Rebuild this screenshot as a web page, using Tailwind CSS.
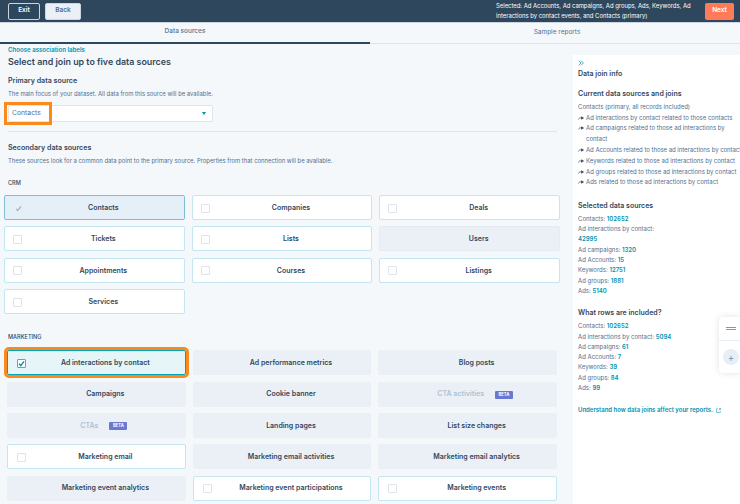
<!DOCTYPE html>
<html lang="en">
<head>
  <meta charset="UTF-8">
  <title>Select and join up to five data sources</title>
  <script src="https://cdn.jsdelivr.net/npm/@tailwindcss/browser@4"></script>
</head>
<body class="w-[740px] h-[504px] overflow-hidden bg-[#f5f8fa] text-[#33475b] font-['Inter','Noto_Sans',sans-serif]">
  <!-- top bar -->
  <header class="h-[23px] bg-[#2e475d] border-b border-[#cbd6e2] flex items-center pl-[8px] pr-[6px]">
    <button class="shrink-0 w-[32px] h-[17px] border border-[#cbd6e2] rounded-[2px] text-white text-[6.5px] font-semibold">Exit</button>
    <button class="shrink-0 w-[36px] h-[17px] ml-[5px] bg-[#eaf0f6] border border-[#cbd6e2] rounded-[2px] text-[#506e91] text-[6.5px] font-semibold">Back</button>
    <p class="ml-[415px] w-[209px] text-white text-[5.9px] leading-[10px] whitespace-nowrap">Selected: Ad Accounts, Ad campaigns, Ad groups, Ads, Keywords, Ad<br>interactions by contact events, and Contacts (primary)</p>
    <button class="shrink-0 w-[29px] h-[17px] bg-[#ff7a59] rounded-[2px] text-white text-[6.5px] font-semibold">Next</button>
  </header>

  <!-- tabs -->
  <nav class="h-[21px] flex text-[6.5px] text-[#516f90]">
    <div class="w-[370px] border-b-[2px] border-[#2e475d] flex items-center justify-center font-medium pb-[1px]">Data sources</div>
    <div class="w-[370px] border-b border-[#dfe3eb] flex items-center justify-center pb-[1px] pl-[4px]">Sample reports</div>
  </nav>

  <div class="flex">
    <!-- left column -->
    <main class="w-[573px] shrink-0 pt-[2px]">
      <div class="pl-[8px] pr-[16px]">
        <a class="block text-[#0091ae] text-[6.1px] leading-[8px] font-semibold">Choose association labels</a>
        <h1 class="mt-[1px] text-[8.9px] leading-[13px] font-semibold">Select and join up to five data sources</h1>
        <h2 class="mt-[8px] text-[7.1px] leading-[10px] font-semibold">Primary data source</h2>
        <p class="mt-[3px] text-[5.9px] leading-[9px] text-[#516f90]">The main focus of your dataset. All data from this source will be available.</p>
        <div class="relative mt-[7px] w-[205px] h-[17px] bg-white border border-[#dfe3eb] rounded-[2px] flex items-center justify-between pl-[3px] pr-[6px] text-[6.8px] text-[#516f90]">
          <span>Contacts</span>
          <span class="w-0 h-0 border-x-[2.5px] border-x-transparent border-t-[3px] border-t-[#0091ae]"></span>
          <span class="absolute left-[-5px] top-[-4px] w-[48px] h-[23px] border-[3px] border-[#f98b1d]"></span>
        </div>
        <hr class="mt-[9px] border-[#dfe3eb]">
        <h2 class="mt-[11px] text-[7.1px] leading-[10px] font-semibold">Secondary data sources</h2>
        <p class="mt-[3px] text-[5.9px] leading-[9px] text-[#516f90] whitespace-nowrap">These sources look for a common data point to the primary source. Properties from that connection will be available.</p>
        <h3 class="mt-[13.500px] text-[5.6px] leading-[8px] font-medium">CRM</h3>
      </div>

      <div class="mt-[8.500px] ml-[4px] w-[556px] grid grid-cols-3 gap-x-[7px] gap-y-[6.4px] auto-rows-[25px] text-[7px] font-semibold">
        <div class="relative flex items-center justify-center pl-[18px] pt-[1px] bg-[#e5eff8] border border-[#7fbfd4] rounded-[2px]"><svg class="absolute left-[10px] w-[7px] h-[7px]" viewBox="0 0 10 10" fill="none" stroke="#9fb2c6" stroke-width="1.8"><path d="M1.5 5.5 4 8 8.500 2"/></svg>Contacts</div>
        <div class="relative flex items-center justify-center pl-[18px] pt-[1px] bg-white border border-[#c4e6f0] rounded-[2px]"><span class="absolute left-[8px] w-[9px] h-[9px] bg-white border border-[#dfe3eb] rounded-[1px]"></span>Companies</div>
        <div class="relative flex items-center justify-center pl-[18px] pt-[1px] bg-white border border-[#c4e6f0] rounded-[2px]"><span class="absolute left-[8px] w-[9px] h-[9px] bg-white border border-[#dfe3eb] rounded-[1px]"></span>Deals</div>
        <div class="relative flex items-center justify-center pl-[18px] pt-[1px] bg-white border border-[#c4e6f0] rounded-[2px]"><span class="absolute left-[8px] w-[9px] h-[9px] bg-white border border-[#dfe3eb] rounded-[1px]"></span>Tickets</div>
        <div class="relative flex items-center justify-center pl-[18px] pt-[1px] bg-white border border-[#c4e6f0] rounded-[2px]"><span class="absolute left-[8px] w-[9px] h-[9px] bg-white border border-[#dfe3eb] rounded-[1px]"></span>Lists</div>
        <div class="flex items-center justify-center pl-[18px] pt-[1px] bg-[#eaf0f6] border border-[#e5ebf3] rounded-[2px]">Users</div>
        <div class="relative flex items-center justify-center pl-[18px] pt-[1px] bg-white border border-[#c4e6f0] rounded-[2px]"><span class="absolute left-[8px] w-[9px] h-[9px] bg-white border border-[#dfe3eb] rounded-[1px]"></span>Appointments</div>
        <div class="relative flex items-center justify-center pl-[18px] pt-[1px] bg-white border border-[#c4e6f0] rounded-[2px]"><span class="absolute left-[8px] w-[9px] h-[9px] bg-white border border-[#dfe3eb] rounded-[1px]"></span>Courses</div>
        <div class="relative flex items-center justify-center pl-[18px] pt-[1px] bg-white border border-[#c4e6f0] rounded-[2px]"><span class="absolute left-[8px] w-[9px] h-[9px] bg-white border border-[#dfe3eb] rounded-[1px]"></span>Listings</div>
        <div class="relative flex items-center justify-center pl-[18px] pt-[1px] bg-white border border-[#c4e6f0] rounded-[2px]"><span class="absolute left-[8px] w-[9px] h-[9px] bg-white border border-[#dfe3eb] rounded-[1px]"></span>Services</div>
      </div>

      <h3 class="mt-[19px] pl-[8px] text-[5.6px] leading-[8px] font-medium">MARKETING</h3>

      <div class="mt-[9px] ml-[7px] w-[550px] grid grid-cols-3 gap-x-[7px] gap-y-[6.4px] auto-rows-[25px] text-[7px] font-semibold">
        <div class="relative flex items-center justify-center pl-[18px] pt-[1px] bg-[#e5f5f8] border border-[#00a4bd] rounded-[2px] outline-[3px] outline-[#f98b1d]"><span class="absolute left-[9px] w-[9px] h-[9px] bg-white border border-[#7c98b6] rounded-[1px] flex items-center justify-center"><svg class="w-[7px] h-[7px]" viewBox="0 0 10 10" fill="none" stroke="#0091ae" stroke-width="2"><path d="M1.5 5.5 4 8 8.500 2"/></svg></span>Ad interactions by contact</div>
        <div class="flex items-center justify-center pl-[18px] pt-[1px] bg-[#eaf0f6] rounded-[2px]">Ad performance metrics</div>
        <div class="flex items-center justify-center pl-[18px] pt-[1px] bg-[#eaf0f6] rounded-[2px]">Blog posts</div>
        <div class="flex items-center justify-center pl-[18px] pt-[1px] bg-[#eaf0f6] rounded-[2px]">Campaigns</div>
        <div class="flex items-center justify-center pl-[18px] pt-[1px] bg-[#eaf0f6] rounded-[2px]">Cookie banner</div>
        <div class="flex items-center justify-center gap-[11px] pl-[15px] pt-[1px] bg-[#eaf0f6] rounded-[2px] text-[#b0c1d4]">CTA activities<span class="bg-[#6a78d1] text-white text-[4.2px] font-bold w-[18px] text-center leading-[8px] rounded-[1px]">BETA</span></div>
        <div class="flex items-center justify-center gap-[11px] pl-[15px] pt-[1px] bg-[#eaf0f6] rounded-[2px] text-[#b0c1d4]">CTAs<span class="bg-[#6a78d1] text-white text-[4.2px] font-bold w-[18px] text-center leading-[8px] rounded-[1px]">BETA</span></div>
        <div class="flex items-center justify-center pl-[18px] pt-[1px] bg-[#eaf0f6] rounded-[2px]">Landing pages</div>
        <div class="flex items-center justify-center pl-[18px] pt-[1px] bg-[#eaf0f6] rounded-[2px]">List size changes</div>
        <div class="relative flex items-center justify-center pl-[18px] pt-[1px] bg-white border border-[#c4e6f0] rounded-[2px]"><span class="absolute left-[9px] w-[9px] h-[9px] bg-white border border-[#dfe3eb] rounded-[1px]"></span>Marketing email</div>
        <div class="flex items-center justify-center pl-[18px] pt-[1px] bg-[#eaf0f6] rounded-[2px]">Marketing email activities</div>
        <div class="flex items-center justify-center pl-[18px] pt-[1px] bg-[#eaf0f6] rounded-[2px]">Marketing email analytics</div>
        <div class="flex items-center justify-center pl-[18px] pt-[1px] bg-[#eaf0f6] rounded-[2px]">Marketing event analytics</div>
        <div class="relative flex items-center justify-center pl-[18px] pt-[1px] bg-white border border-[#c4e6f0] rounded-[2px]"><span class="absolute left-[9px] w-[9px] h-[9px] bg-white border border-[#dfe3eb] rounded-[1px]"></span>Marketing event participations</div>
        <div class="relative flex items-center justify-center pl-[18px] pt-[1px] bg-white border border-[#c4e6f0] rounded-[2px]"><span class="absolute left-[9px] w-[9px] h-[9px] bg-white border border-[#dfe3eb] rounded-[1px]"></span>Marketing events</div>
      </div>
    </main>

    <!-- data join info -->
    <aside class="relative mt-[11px] h-[460px] grow bg-white pl-[5px] text-[6px] leading-[10.3px] text-[#516f90] whitespace-nowrap">
      <svg class="mt-[5px] w-[6px] h-[6px]" viewBox="0 0 10 10" fill="none" stroke="#0091ae" stroke-width="1.2"><path d="M1 1l4 4-4 4M5 1l4 4-4 4"/></svg>
      <h2 class="mt-[3px] text-[7px] leading-[10px] font-semibold text-[#33475b]">Data join info</h2>
      <h3 class="mt-[10px] text-[7px] leading-[10px] font-semibold text-[#33475b]">Current data sources and joins</h3>
      <p class="mt-[3px]">Contacts (primary, all records included)</p>
      <ul>
        <li class="flex items-center gap-[2px] h-[10.8px]"><svg class="w-[6px] h-[4px] shrink-0" viewBox="0 0 12 8" fill="none" stroke="#33475b" stroke-width="1.4"><path d="M1 7C2 4 4 3 8 4"/><path d="M7 1.5 11 4 7 6.500z" fill="#33475b"/></svg>Ad interactions by contact related to those contacts</li>
        <li class="flex items-center gap-[2px] h-[10.8px]"><svg class="w-[6px] h-[4px] shrink-0" viewBox="0 0 12 8" fill="none" stroke="#33475b" stroke-width="1.4"><path d="M1 7C2 4 4 3 8 4"/><path d="M7 1.5 11 4 7 6.500z" fill="#33475b"/></svg>Ad campaigns related to those ad interactions by</li>
        <li class="pl-[8px] h-[10.8px]">contact</li>
        <li class="flex items-center gap-[2px] h-[10.8px] tracking-[-0.04px]"><svg class="w-[6px] h-[4px] shrink-0" viewBox="0 0 12 8" fill="none" stroke="#33475b" stroke-width="1.4"><path d="M1 7C2 4 4 3 8 4"/><path d="M7 1.5 11 4 7 6.500z" fill="#33475b"/></svg>Ad Accounts related to those ad interactions by contact</li>
        <li class="flex items-center gap-[2px] h-[10.8px]"><svg class="w-[6px] h-[4px] shrink-0" viewBox="0 0 12 8" fill="none" stroke="#33475b" stroke-width="1.4"><path d="M1 7C2 4 4 3 8 4"/><path d="M7 1.5 11 4 7 6.500z" fill="#33475b"/></svg>Keywords related to those ad interactions by contact</li>
        <li class="flex items-center gap-[2px] h-[10.8px]"><svg class="w-[6px] h-[4px] shrink-0" viewBox="0 0 12 8" fill="none" stroke="#33475b" stroke-width="1.4"><path d="M1 7C2 4 4 3 8 4"/><path d="M7 1.5 11 4 7 6.500z" fill="#33475b"/></svg>Ad groups related to those ad interactions by contact</li>
        <li class="flex items-center gap-[2px] h-[10.8px]"><svg class="w-[6px] h-[4px] shrink-0" viewBox="0 0 12 8" fill="none" stroke="#33475b" stroke-width="1.4"><path d="M1 7C2 4 4 3 8 4"/><path d="M7 1.5 11 4 7 6.500z" fill="#33475b"/></svg>Ads related to those ad interactions by contact</li>
      </ul>
      <h3 class="mt-[13px] text-[7px] leading-[10px] font-semibold text-[#33475b]">Selected data sources</h3>
      <div class="mt-[3px]">
        <p>Contacts: <b class="font-semibold text-[#0091ae]">102652</b></p>
        <p>Ad interactions by contact:</p>
        <p><b class="font-semibold text-[#0091ae]">42995</b></p>
        <p>Ad campaigns: <b class="font-semibold text-[#0091ae]">1320</b></p>
        <p>Ad Accounts: <b class="font-semibold text-[#0091ae]">15</b></p>
        <p>Keywords: <b class="font-semibold text-[#0091ae]">12751</b></p>
        <p>Ad groups: <b class="font-semibold text-[#0091ae]">1881</b></p>
        <p>Ads: <b class="font-semibold text-[#0091ae]">5140</b></p>
      </div>
      <h3 class="mt-[12px] text-[7px] leading-[10px] font-semibold text-[#33475b]">What rows are included?</h3>
      <div class="mt-[3px]">
        <p>Contacts: <b class="font-semibold text-[#0091ae]">102652</b></p>
        <p>Ad interactions by contact: <b class="font-semibold text-[#0091ae]">5094</b></p>
        <p>Ad campaigns: <b class="font-semibold text-[#0091ae]">61</b></p>
        <p>Ad Accounts: <b class="font-semibold text-[#0091ae]">7</b></p>
        <p>Keywords: <b class="font-semibold text-[#0091ae]">39</b></p>
        <p>Ad groups: <b class="font-semibold text-[#0091ae]">84</b></p>
        <p>Ads: <b class="font-semibold text-[#0091ae]">99</b></p>
      </div>
      <a class="mt-[12px] flex items-center gap-[3px] font-semibold text-[#0091ae]">Understand how data joins affect your reports.<svg class="w-[5px] h-[5px]" viewBox="0 0 10 10" fill="none" stroke="#0091ae" stroke-width="1"><path d="M4 1.5H1v7.500h7.500V6M5 5l4-4M6 1h3v3"/></svg></a>

      <!-- floating widget -->
      <div class="absolute left-[146px] top-[262px] w-[21px] h-[56px] bg-white rounded-l-[4px] shadow-[0_0_6px_rgba(45,62,80,0.15)] flex flex-col">
        <div class="h-[24px] border-b border-[#eaf0f6] flex items-center pl-[7px]"><span class="w-[10px] h-[3px] border-y border-[#7c98b6]"></span></div>
        <div class="grow flex items-center pl-[4px]"><span class="w-[16px] h-[16px] shrink-0 rounded-full bg-[#e5eff8] flex items-center justify-center text-[#7c98b6] text-[10px] leading-none">+</span></div>
      </div>
    </aside>
  </div>
</body>
</html>
